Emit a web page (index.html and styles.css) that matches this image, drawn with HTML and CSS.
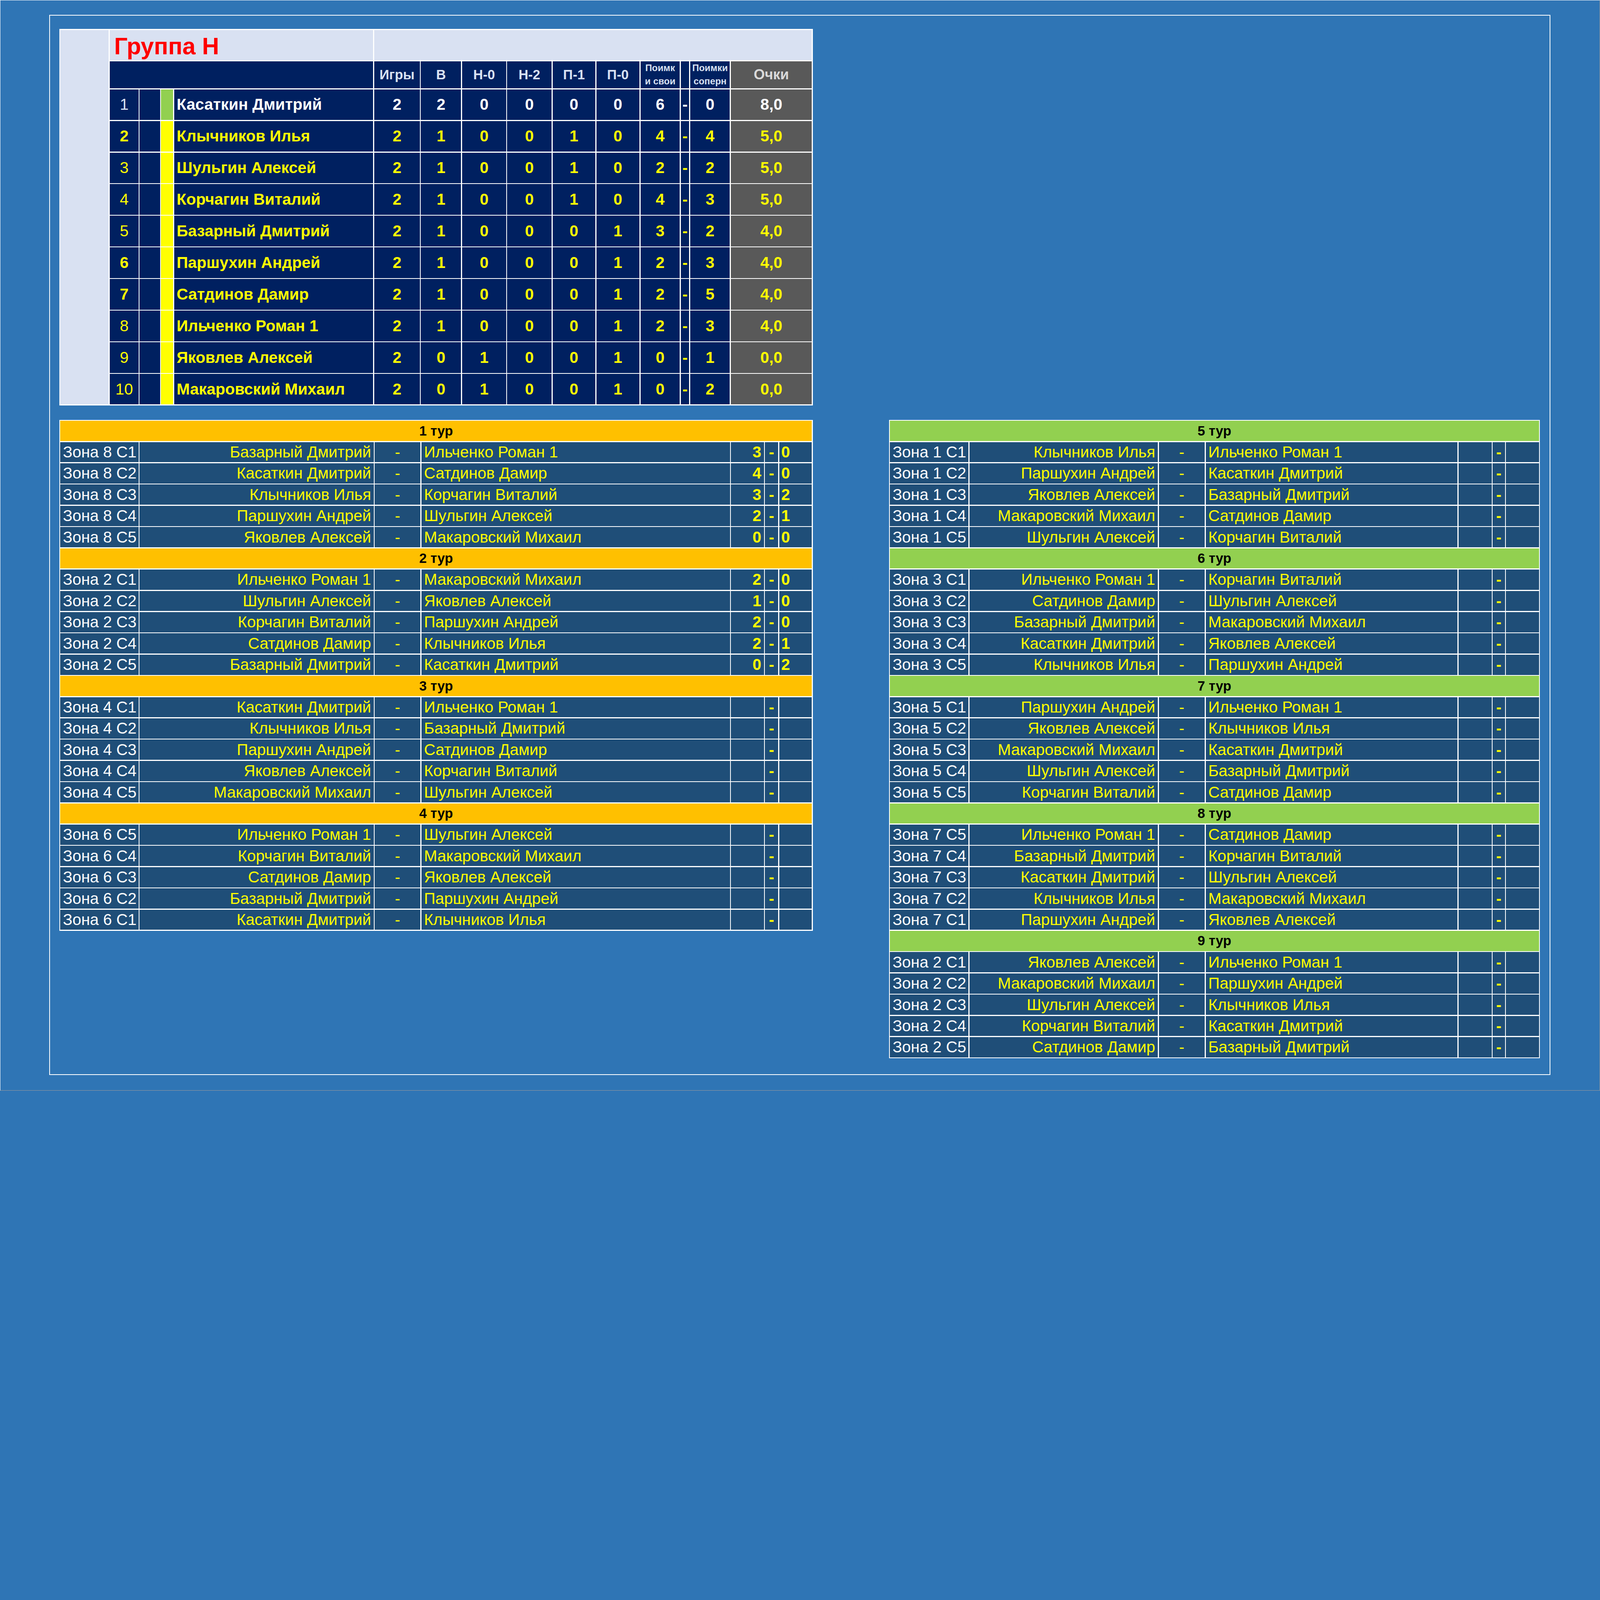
FILE: index.html
```html
<!DOCTYPE html>
<html lang="ru">
<head>
<meta charset="utf-8">
<title>Группа Н</title>
<link rel="stylesheet" href="styles.css">
</head>
<body>
<div class="page">
  <div class="frame">
    <div class="layout">

      <div class="standings">
        <div class="side"></div>
        <div class="title">Группа Н</div>
        <div class="title-fill"></div>

        <div class="hd-blank"></div>
        <div class="hd">Игры</div>
        <div class="hd">В</div>
        <div class="hd">Н-0</div>
        <div class="hd">Н-2</div>
        <div class="hd">П-1</div>
        <div class="hd">П-0</div>
        <div class="hd hd-sm">Поимк<br>и свои</div>
        <div class="hd"></div>
        <div class="hd hd-sm">Поимки<br>соперн</div>
        <div class="hd hd-pts">Очки</div>

        <div class="row first">
          <div class="cell rank">1</div><div class="cell"></div><div class="bar"></div>
          <div class="cell name">Касаткин Дмитрий</div>
          <div class="cell">2</div><div class="cell">2</div><div class="cell">0</div><div class="cell">0</div><div class="cell">0</div><div class="cell">0</div>
          <div class="cell">6</div><div class="cell">-</div><div class="cell">0</div><div class="cell pts">8,0</div>
        </div>
        <div class="row">
          <div class="cell rank b">2</div><div class="cell"></div><div class="bar"></div>
          <div class="cell name">Клычников Илья</div>
          <div class="cell">2</div><div class="cell">1</div><div class="cell">0</div><div class="cell">0</div><div class="cell">1</div><div class="cell">0</div>
          <div class="cell">4</div><div class="cell">-</div><div class="cell">4</div><div class="cell pts">5,0</div>
        </div>
        <div class="row">
          <div class="cell rank">3</div><div class="cell"></div><div class="bar"></div>
          <div class="cell name">Шульгин Алексей</div>
          <div class="cell">2</div><div class="cell">1</div><div class="cell">0</div><div class="cell">0</div><div class="cell">1</div><div class="cell">0</div>
          <div class="cell">2</div><div class="cell">-</div><div class="cell">2</div><div class="cell pts">5,0</div>
        </div>
        <div class="row">
          <div class="cell rank">4</div><div class="cell"></div><div class="bar"></div>
          <div class="cell name">Корчагин Виталий</div>
          <div class="cell">2</div><div class="cell">1</div><div class="cell">0</div><div class="cell">0</div><div class="cell">1</div><div class="cell">0</div>
          <div class="cell">4</div><div class="cell">-</div><div class="cell">3</div><div class="cell pts">5,0</div>
        </div>
        <div class="row">
          <div class="cell rank">5</div><div class="cell"></div><div class="bar"></div>
          <div class="cell name">Базарный Дмитрий</div>
          <div class="cell">2</div><div class="cell">1</div><div class="cell">0</div><div class="cell">0</div><div class="cell">0</div><div class="cell">1</div>
          <div class="cell">3</div><div class="cell">-</div><div class="cell">2</div><div class="cell pts">4,0</div>
        </div>
        <div class="row">
          <div class="cell rank b">6</div><div class="cell"></div><div class="bar"></div>
          <div class="cell name">Паршухин Андрей</div>
          <div class="cell">2</div><div class="cell">1</div><div class="cell">0</div><div class="cell">0</div><div class="cell">0</div><div class="cell">1</div>
          <div class="cell">2</div><div class="cell">-</div><div class="cell">3</div><div class="cell pts">4,0</div>
        </div>
        <div class="row">
          <div class="cell rank b">7</div><div class="cell"></div><div class="bar"></div>
          <div class="cell name">Сатдинов Дамир</div>
          <div class="cell">2</div><div class="cell">1</div><div class="cell">0</div><div class="cell">0</div><div class="cell">0</div><div class="cell">1</div>
          <div class="cell">2</div><div class="cell">-</div><div class="cell">5</div><div class="cell pts">4,0</div>
        </div>
        <div class="row">
          <div class="cell rank">8</div><div class="cell"></div><div class="bar"></div>
          <div class="cell name">Ильченко Роман 1</div>
          <div class="cell">2</div><div class="cell">1</div><div class="cell">0</div><div class="cell">0</div><div class="cell">0</div><div class="cell">1</div>
          <div class="cell">2</div><div class="cell">-</div><div class="cell">3</div><div class="cell pts">4,0</div>
        </div>
        <div class="row">
          <div class="cell rank">9</div><div class="cell"></div><div class="bar"></div>
          <div class="cell name">Яковлев Алексей</div>
          <div class="cell">2</div><div class="cell">0</div><div class="cell">1</div><div class="cell">0</div><div class="cell">0</div><div class="cell">1</div>
          <div class="cell">0</div><div class="cell">-</div><div class="cell">1</div><div class="cell pts">0,0</div>
        </div>
        <div class="row">
          <div class="cell rank">10</div><div class="cell"></div><div class="bar"></div>
          <div class="cell name">Макаровский Михаил</div>
          <div class="cell">2</div><div class="cell">0</div><div class="cell">1</div><div class="cell">0</div><div class="cell">0</div><div class="cell">1</div>
          <div class="cell">0</div><div class="cell">-</div><div class="cell">2</div><div class="cell pts">0,0</div>
        </div>
      </div>

      <div class="matches left">
        <div class="round">1 тур</div>
        <div class="m zone">Зона 8 С1</div><div class="m n1">Базарный Дмитрий</div><div class="m dash">-</div><div class="m n2">Ильченко Роман 1</div><div class="m s1">3</div><div class="m sd">-</div><div class="m s2">0</div>
        <div class="m zone">Зона 8 С2</div><div class="m n1">Касаткин Дмитрий</div><div class="m dash">-</div><div class="m n2">Сатдинов Дамир</div><div class="m s1">4</div><div class="m sd">-</div><div class="m s2">0</div>
        <div class="m zone">Зона 8 С3</div><div class="m n1">Клычников Илья</div><div class="m dash">-</div><div class="m n2">Корчагин Виталий</div><div class="m s1">3</div><div class="m sd">-</div><div class="m s2">2</div>
        <div class="m zone">Зона 8 С4</div><div class="m n1">Паршухин Андрей</div><div class="m dash">-</div><div class="m n2">Шульгин Алексей</div><div class="m s1">2</div><div class="m sd">-</div><div class="m s2">1</div>
        <div class="m zone">Зона 8 С5</div><div class="m n1">Яковлев Алексей</div><div class="m dash">-</div><div class="m n2">Макаровский Михаил</div><div class="m s1">0</div><div class="m sd">-</div><div class="m s2">0</div>
        <div class="round">2 тур</div>
        <div class="m zone">Зона 2 С1</div><div class="m n1">Ильченко Роман 1</div><div class="m dash">-</div><div class="m n2">Макаровский Михаил</div><div class="m s1">2</div><div class="m sd">-</div><div class="m s2">0</div>
        <div class="m zone">Зона 2 С2</div><div class="m n1">Шульгин Алексей</div><div class="m dash">-</div><div class="m n2">Яковлев Алексей</div><div class="m s1">1</div><div class="m sd">-</div><div class="m s2">0</div>
        <div class="m zone">Зона 2 С3</div><div class="m n1">Корчагин Виталий</div><div class="m dash">-</div><div class="m n2">Паршухин Андрей</div><div class="m s1">2</div><div class="m sd">-</div><div class="m s2">0</div>
        <div class="m zone">Зона 2 С4</div><div class="m n1">Сатдинов Дамир</div><div class="m dash">-</div><div class="m n2">Клычников Илья</div><div class="m s1">2</div><div class="m sd">-</div><div class="m s2">1</div>
        <div class="m zone">Зона 2 С5</div><div class="m n1">Базарный Дмитрий</div><div class="m dash">-</div><div class="m n2">Касаткин Дмитрий</div><div class="m s1">0</div><div class="m sd">-</div><div class="m s2">2</div>
        <div class="round">3 тур</div>
        <div class="m zone">Зона 4 С1</div><div class="m n1">Касаткин Дмитрий</div><div class="m dash">-</div><div class="m n2">Ильченко Роман 1</div><div class="m s1"></div><div class="m sd">-</div><div class="m s2"></div>
        <div class="m zone">Зона 4 С2</div><div class="m n1">Клычников Илья</div><div class="m dash">-</div><div class="m n2">Базарный Дмитрий</div><div class="m s1"></div><div class="m sd">-</div><div class="m s2"></div>
        <div class="m zone">Зона 4 С3</div><div class="m n1">Паршухин Андрей</div><div class="m dash">-</div><div class="m n2">Сатдинов Дамир</div><div class="m s1"></div><div class="m sd">-</div><div class="m s2"></div>
        <div class="m zone">Зона 4 С4</div><div class="m n1">Яковлев Алексей</div><div class="m dash">-</div><div class="m n2">Корчагин Виталий</div><div class="m s1"></div><div class="m sd">-</div><div class="m s2"></div>
        <div class="m zone">Зона 4 С5</div><div class="m n1">Макаровский Михаил</div><div class="m dash">-</div><div class="m n2">Шульгин Алексей</div><div class="m s1"></div><div class="m sd">-</div><div class="m s2"></div>
        <div class="round">4 тур</div>
        <div class="m zone">Зона 6 С5</div><div class="m n1">Ильченко Роман 1</div><div class="m dash">-</div><div class="m n2">Шульгин Алексей</div><div class="m s1"></div><div class="m sd">-</div><div class="m s2"></div>
        <div class="m zone">Зона 6 С4</div><div class="m n1">Корчагин Виталий</div><div class="m dash">-</div><div class="m n2">Макаровский Михаил</div><div class="m s1"></div><div class="m sd">-</div><div class="m s2"></div>
        <div class="m zone">Зона 6 С3</div><div class="m n1">Сатдинов Дамир</div><div class="m dash">-</div><div class="m n2">Яковлев Алексей</div><div class="m s1"></div><div class="m sd">-</div><div class="m s2"></div>
        <div class="m zone">Зона 6 С2</div><div class="m n1">Базарный Дмитрий</div><div class="m dash">-</div><div class="m n2">Паршухин Андрей</div><div class="m s1"></div><div class="m sd">-</div><div class="m s2"></div>
        <div class="m zone">Зона 6 С1</div><div class="m n1">Касаткин Дмитрий</div><div class="m dash">-</div><div class="m n2">Клычников Илья</div><div class="m s1"></div><div class="m sd">-</div><div class="m s2"></div>
      </div>

      <div class="matches right">
        <div class="round">5 тур</div>
        <div class="m zone">Зона 1 С1</div><div class="m n1">Клычников Илья</div><div class="m dash">-</div><div class="m n2">Ильченко Роман 1</div><div class="m s1"></div><div class="m sd">-</div><div class="m s2"></div>
        <div class="m zone">Зона 1 С2</div><div class="m n1">Паршухин Андрей</div><div class="m dash">-</div><div class="m n2">Касаткин Дмитрий</div><div class="m s1"></div><div class="m sd">-</div><div class="m s2"></div>
        <div class="m zone">Зона 1 С3</div><div class="m n1">Яковлев Алексей</div><div class="m dash">-</div><div class="m n2">Базарный Дмитрий</div><div class="m s1"></div><div class="m sd">-</div><div class="m s2"></div>
        <div class="m zone">Зона 1 С4</div><div class="m n1">Макаровский Михаил</div><div class="m dash">-</div><div class="m n2">Сатдинов Дамир</div><div class="m s1"></div><div class="m sd">-</div><div class="m s2"></div>
        <div class="m zone">Зона 1 С5</div><div class="m n1">Шульгин Алексей</div><div class="m dash">-</div><div class="m n2">Корчагин Виталий</div><div class="m s1"></div><div class="m sd">-</div><div class="m s2"></div>
        <div class="round">6 тур</div>
        <div class="m zone">Зона 3 С1</div><div class="m n1">Ильченко Роман 1</div><div class="m dash">-</div><div class="m n2">Корчагин Виталий</div><div class="m s1"></div><div class="m sd">-</div><div class="m s2"></div>
        <div class="m zone">Зона 3 С2</div><div class="m n1">Сатдинов Дамир</div><div class="m dash">-</div><div class="m n2">Шульгин Алексей</div><div class="m s1"></div><div class="m sd">-</div><div class="m s2"></div>
        <div class="m zone">Зона 3 С3</div><div class="m n1">Базарный Дмитрий</div><div class="m dash">-</div><div class="m n2">Макаровский Михаил</div><div class="m s1"></div><div class="m sd">-</div><div class="m s2"></div>
        <div class="m zone">Зона 3 С4</div><div class="m n1">Касаткин Дмитрий</div><div class="m dash">-</div><div class="m n2">Яковлев Алексей</div><div class="m s1"></div><div class="m sd">-</div><div class="m s2"></div>
        <div class="m zone">Зона 3 С5</div><div class="m n1">Клычников Илья</div><div class="m dash">-</div><div class="m n2">Паршухин Андрей</div><div class="m s1"></div><div class="m sd">-</div><div class="m s2"></div>
        <div class="round">7 тур</div>
        <div class="m zone">Зона 5 С1</div><div class="m n1">Паршухин Андрей</div><div class="m dash">-</div><div class="m n2">Ильченко Роман 1</div><div class="m s1"></div><div class="m sd">-</div><div class="m s2"></div>
        <div class="m zone">Зона 5 С2</div><div class="m n1">Яковлев Алексей</div><div class="m dash">-</div><div class="m n2">Клычников Илья</div><div class="m s1"></div><div class="m sd">-</div><div class="m s2"></div>
        <div class="m zone">Зона 5 С3</div><div class="m n1">Макаровский Михаил</div><div class="m dash">-</div><div class="m n2">Касаткин Дмитрий</div><div class="m s1"></div><div class="m sd">-</div><div class="m s2"></div>
        <div class="m zone">Зона 5 С4</div><div class="m n1">Шульгин Алексей</div><div class="m dash">-</div><div class="m n2">Базарный Дмитрий</div><div class="m s1"></div><div class="m sd">-</div><div class="m s2"></div>
        <div class="m zone">Зона 5 С5</div><div class="m n1">Корчагин Виталий</div><div class="m dash">-</div><div class="m n2">Сатдинов Дамир</div><div class="m s1"></div><div class="m sd">-</div><div class="m s2"></div>
        <div class="round">8 тур</div>
        <div class="m zone">Зона 7 С5</div><div class="m n1">Ильченко Роман 1</div><div class="m dash">-</div><div class="m n2">Сатдинов Дамир</div><div class="m s1"></div><div class="m sd">-</div><div class="m s2"></div>
        <div class="m zone">Зона 7 С4</div><div class="m n1">Базарный Дмитрий</div><div class="m dash">-</div><div class="m n2">Корчагин Виталий</div><div class="m s1"></div><div class="m sd">-</div><div class="m s2"></div>
        <div class="m zone">Зона 7 С3</div><div class="m n1">Касаткин Дмитрий</div><div class="m dash">-</div><div class="m n2">Шульгин Алексей</div><div class="m s1"></div><div class="m sd">-</div><div class="m s2"></div>
        <div class="m zone">Зона 7 С2</div><div class="m n1">Клычников Илья</div><div class="m dash">-</div><div class="m n2">Макаровский Михаил</div><div class="m s1"></div><div class="m sd">-</div><div class="m s2"></div>
        <div class="m zone">Зона 7 С1</div><div class="m n1">Паршухин Андрей</div><div class="m dash">-</div><div class="m n2">Яковлев Алексей</div><div class="m s1"></div><div class="m sd">-</div><div class="m s2"></div>
        <div class="round">9 тур</div>
        <div class="m zone">Зона 2 С1</div><div class="m n1">Яковлев Алексей</div><div class="m dash">-</div><div class="m n2">Ильченко Роман 1</div><div class="m s1"></div><div class="m sd">-</div><div class="m s2"></div>
        <div class="m zone">Зона 2 С2</div><div class="m n1">Макаровский Михаил</div><div class="m dash">-</div><div class="m n2">Паршухин Андрей</div><div class="m s1"></div><div class="m sd">-</div><div class="m s2"></div>
        <div class="m zone">Зона 2 С3</div><div class="m n1">Шульгин Алексей</div><div class="m dash">-</div><div class="m n2">Клычников Илья</div><div class="m s1"></div><div class="m sd">-</div><div class="m s2"></div>
        <div class="m zone">Зона 2 С4</div><div class="m n1">Корчагин Виталий</div><div class="m dash">-</div><div class="m n2">Касаткин Дмитрий</div><div class="m s1"></div><div class="m sd">-</div><div class="m s2"></div>
        <div class="m zone">Зона 2 С5</div><div class="m n1">Сатдинов Дамир</div><div class="m dash">-</div><div class="m n2">Базарный Дмитрий</div><div class="m s1"></div><div class="m sd">-</div><div class="m s2"></div>
      </div>

    </div>
  </div>
</div>
</body>
</html>
```

FILE: styles.css
```css
/* 1rem = 100 reference pixels; the sheet scales with the window width */
html {
  font-size: calc(100vw / 61.71);
  overflow: hidden;
  background: #2F75B5;
}

body {
  margin: 0;
  padding: 0;
  overflow: hidden;
  font-family: "Liberation Sans", Arial, sans-serif;
  background: #2F75B5;
}

.page {
  width: 61.71rem;
  height: 42.07rem;
  box-sizing: border-box;
  border-style: solid;
  border-width: 0.02rem;
  border-color: #ffffff #9a9a9a #9a9a9a #ffffff;
  background: #2F75B5;
  padding: 0.56rem 0 0 1.88rem;
  overflow: hidden;
}

.frame {
  width: 57.9rem;
  height: 40.89rem;
  box-sizing: border-box;
  border: 0.04rem solid #ffffff;
  padding: 0.51rem 0 0 0.36rem;
}

.layout {
  display: grid;
  grid-template-columns: 29.07rem 25.11rem;
  column-gap: 2.93rem;
  row-gap: 0.55rem;
  align-items: start;
}

/* ---------- standings ---------- */
.standings {
  grid-column: 1;
  grid-row: 1;
  display: grid;
  grid-template-columns: 1.87rem 1.11rem 0.79rem 0.46rem 7.68rem 1.76rem 1.55rem 1.7rem 1.71rem 1.65rem 1.66rem 1.52rem 0.32rem 1.53rem 3.12rem;
  grid-template-rows: 1.17rem 1.04rem repeat(10, 1.18rem);
  gap: 0.04rem;
  padding: 0.04rem;
  background: #ffffff;
}

.side {
  grid-row: 1 / span 12;
  grid-column: 1;
  background: #D9E1F2;
}

.title {
  grid-column: span 4;
  background: #D9E1F2;
  color: #FF0000;
  font-weight: bold;
  font-size: 0.91rem;
  display: flex;
  align-items: center;
  padding-left: 0.17rem;
  padding-top: 0.08rem;
}

.title-fill {
  grid-column: span 10;
  background: #D9E1F2;
}

.hd-blank {
  grid-column: span 4;
  background: #002060;
}

.hd {
  background: #002060;
  color: #D9E1F2;
  font-weight: bold;
  font-size: 0.52rem;
  display: flex;
  align-items: center;
  justify-content: center;
  text-align: center;
}

.hd-sm {
  font-size: 0.36rem;
  line-height: 0.52rem;
}

.hd-pts {
  background: #595959;
  color: #D9D9D9;
  font-size: 0.55rem;
}

.row {
  display: contents;
  color: #FFFF00;
}

.row.first {
  color: #ffffff;
}

.cell {
  background: #002060;
  font-weight: bold;
  font-size: 0.61rem;
  display: flex;
  align-items: center;
  justify-content: center;
  white-space: nowrap;
  overflow: hidden;
}

.cell.rank {
  font-weight: normal;
}

.cell.rank.b {
  font-weight: bold;
}

.first .cell.rank {
  color: #D9E1F2;
}

.bar {
  background: #FFFF00;
}

.first .bar {
  background: #92D050;
}

.cell.name {
  justify-content: flex-start;
  padding-left: 0.1rem;
}

.cell.pts {
  background: #595959;
}

/* ---------- matches ---------- */
.matches {
  grid-row: 2;
  display: grid;
  grid-auto-rows: 0.78rem;
  gap: 0.04rem;
  padding: 0.04rem;
  background: #ffffff;
  font-size: 0.61rem;
}

.matches.left {
  grid-column: 1;
  grid-template-columns: 3.02rem 9.03rem 1.76rem 11.9rem 1.27rem 0.51rem 1.26rem;
}

.matches.right {
  grid-column: 2;
  grid-template-columns: 3.03rem 7.26rem 1.77rem 9.71rem 1.28rem 0.47rem 1.27rem;
}

.round {
  grid-column: 1 / -1;
  background: #FFC000;
  color: #000000;
  font-weight: bold;
  font-size: 0.52rem;
  display: flex;
  align-items: center;
  justify-content: center;
}

.right .round {
  background: #92D050;
}

.m {
  background: #1F4E78;
  color: #FFFF00;
  display: flex;
  align-items: center;
  white-space: nowrap;
  overflow: hidden;
}

.m.zone {
  color: #ffffff;
  padding-left: 0.1rem;
}

.m.n1 {
  justify-content: flex-end;
  padding-right: 0.1rem;
}

.m.dash {
  justify-content: center;
}

.m.n2 {
  padding-left: 0.1rem;
}

.m.s1 {
  justify-content: flex-end;
  padding-right: 0.1rem;
  font-weight: bold;
}

.m.sd {
  justify-content: center;
  font-weight: bold;
}

.m.s2 {
  padding-left: 0.08rem;
  font-weight: bold;
}
```
